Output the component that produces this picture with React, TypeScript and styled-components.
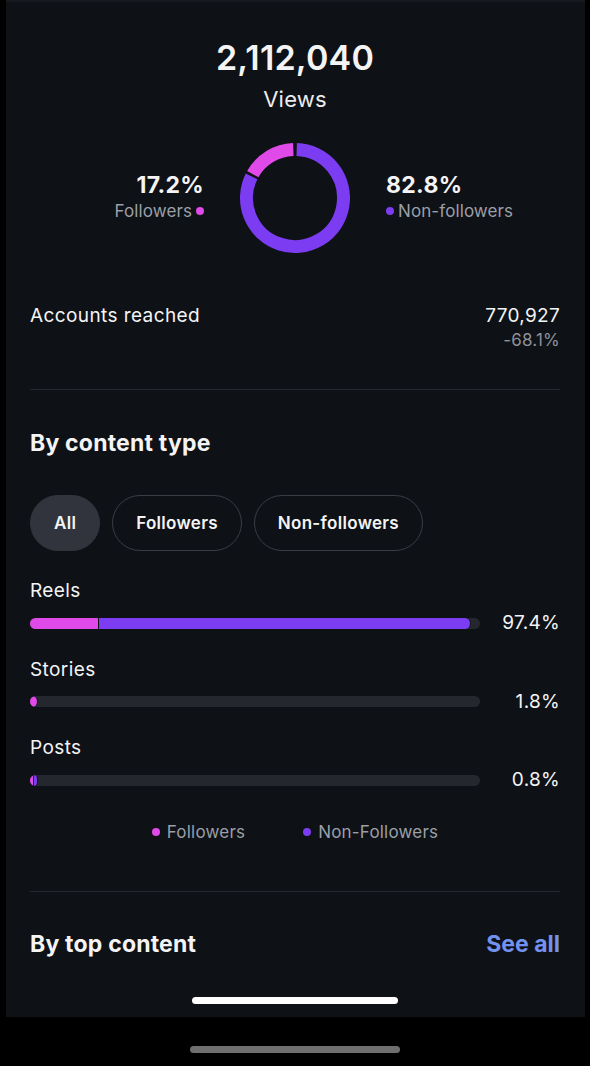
import styled, { createGlobalStyle } from "styled-components";

const PINK = "#e04ae8";
const PURPLE = "#7c3cf1";

type Segment = { color: string; width: number };

type ContentRow = {
  label: string;
  percent: string;
  segments: Segment[];
};

const rows: ContentRow[] = [
  {
    label: "Reels",
    percent: "97.4%",
    segments: [
      { color: PINK, width: 68 },
      { color: PURPLE, width: 371 },
    ],
  },
  {
    label: "Stories",
    percent: "1.8%",
    segments: [{ color: PINK, width: 7 }],
  },
  {
    label: "Posts",
    percent: "0.8%",
    segments: [
      { color: PINK, width: 3 },
      { color: PURPLE, width: 3 },
    ],
  },
];

const filters = ["All", "Followers", "Non-followers"];

const arcPath = (cx: number, cy: number, r: number, a0: number, a1: number) => {
  const pt = (a: number) => {
    const rad = (a * Math.PI) / 180;
    return [cx + r * Math.sin(rad), cy - r * Math.cos(rad)];
  };
  const [x0, y0] = pt(a0);
  const [x1, y1] = pt(a1);
  const large = a1 - a0 > 180 ? 1 : 0;
  return `M ${x0} ${y0} A ${r} ${r} 0 ${large} 1 ${x1} ${y1}`;
};

const Donut = () => (
  <svg width="110" height="110" viewBox="0 0 110 110">
    <path d={arcPath(55, 55, 48.5, 2, 296.5)} stroke={PURPLE} strokeWidth="13" fill="none" />
    <path d={arcPath(55, 55, 48.5, 299.5, 358)} stroke={PINK} strokeWidth="13" fill="none" />
  </svg>
);

export default function App() {
  return (
    <Screen>
      <GlobalStyle />
      <Panel>
        <Hero>
          <TotalViews>2,112,040</TotalViews>
          <ViewsLabel>Views</ViewsLabel>
        </Hero>

        <SplitRow>
          <SplitStat $align="right">
            <SplitValue>17.2%</SplitValue>
            <SplitLabel>
              Followers
              <Dot $color={PINK} />
            </SplitLabel>
          </SplitStat>
          <Donut />
          <SplitStat $align="left">
            <SplitValue>82.8%</SplitValue>
            <SplitLabel>
              <Dot $color={PURPLE} />
              Non-followers
            </SplitLabel>
          </SplitStat>
        </SplitRow>

        <StatRow>
          <StatName>Accounts reached</StatName>
          <StatNumbers>
            <StatValue>770,927</StatValue>
            <StatChange>-68.1%</StatChange>
          </StatNumbers>
        </StatRow>

        <Divider />

        <SectionTitle>By content type</SectionTitle>

        <PillRow>
          {filters.map((f, i) => (
            <Pill key={f} $active={i === 0}>
              {f}
            </Pill>
          ))}
        </PillRow>

        <BarList>
          {rows.map((row) => (
            <BarGroup key={row.label}>
              <BarLabel>{row.label}</BarLabel>
              <BarRow>
                <Track>
                  {row.segments.map((s, i) => (
                    <Fill key={i} $color={s.color} style={{ width: s.width }} />
                  ))}
                </Track>
                <BarPercent>{row.percent}</BarPercent>
              </BarRow>
            </BarGroup>
          ))}
        </BarList>

        <Legend>
          <LegendItem>
            <Dot $color={PINK} />
            Followers
          </LegendItem>
          <LegendItem>
            <Dot $color={PURPLE} />
            Non-Followers
          </LegendItem>
        </Legend>

        <Divider $top={48} />

        <SectionHeader>
          <SectionTitle $top={0}>By top content</SectionTitle>
          <SeeAll>See all</SeeAll>
        </SectionHeader>

        <HomeIndicator />
      </Panel>
      <SystemBar>
        <SystemIndicator />
      </SystemBar>
    </Screen>
  );
}

const GlobalStyle = createGlobalStyle`
  html, body {
    margin: 0;
    padding: 0;
    background: #000;
  }
  body {
    font-family: Inter, "Noto Sans", sans-serif;
    -webkit-font-smoothing: antialiased;
  }
`;

const Screen = styled.div`
  width: 590px;
  height: 1066px;
  display: flex;
  flex-direction: column;
  background: #000;
`;

const Panel = styled.div`
  box-sizing: border-box;
  width: 579px;
  height: 1017px;
  margin-left: 6px;
  padding: 36px 25px 0 24px;
  background: #0e1116;
  border-top: 2px solid #161920;
  display: flex;
  flex-direction: column;
  color: #f4f4f5;
`;

const Hero = styled.div`
  display: flex;
  flex-direction: column;
  align-items: center;
`;

const TotalViews = styled.div`
  font-size: 34px;
  line-height: 40px;
  font-weight: 600;
  letter-spacing: 0.2px;
`;

const ViewsLabel = styled.div`
  margin-top: 7px;
  font-size: 22px;
  line-height: 28px;
  color: #ececee;
  letter-spacing: 0.2px;
`;

const SplitRow = styled.div`
  margin-top: 30px;
  display: grid;
  grid-template-columns: 1fr auto 1fr;
  column-gap: 36px;
  align-items: center;
`;

const SplitStat = styled.div<{ $align: "left" | "right" }>`
  display: flex;
  flex-direction: column;
  align-items: ${(p) => (p.$align === "right" ? "flex-end" : "flex-start")};
  padding-bottom: 2px;
`;

const SplitValue = styled.div`
  font-size: 23px;
  line-height: 26px;
  font-weight: 700;
  letter-spacing: 0.3px;
`;

const SplitLabel = styled.div`
  margin-top: 2px;
  display: flex;
  align-items: center;
  gap: 4px;
  font-size: 17px;
  line-height: 22px;
  color: #9b9fa7;
  letter-spacing: 0.1px;
`;

const Dot = styled.span<{ $color: string }>`
  width: 8px;
  height: 8px;
  border-radius: 50%;
  background: ${(p) => p.$color};
  flex-shrink: 0;
`;

const StatRow = styled.div`
  margin-top: 51px;
  display: flex;
  justify-content: space-between;
  align-items: flex-start;
`;

const StatName = styled.div`
  font-size: 19px;
  line-height: 24px;
  letter-spacing: 0.4px;
`;

const StatNumbers = styled.div`
  display: flex;
  flex-direction: column;
  align-items: flex-end;
`;

const StatValue = styled.div`
  font-size: 19px;
  line-height: 24px;
  letter-spacing: 0.3px;
`;

const StatChange = styled.div`
  margin-top: 1px;
  font-size: 17px;
  line-height: 22px;
  color: #8e9299;
  letter-spacing: 0.2px;
`;

const Divider = styled.div<{ $top?: number }>`
  margin-top: ${(p) => p.$top ?? 38}px;
  height: 1px;
  background: #25282f;
`;

const SectionTitle = styled.div<{ $top?: number }>`
  margin-top: ${(p) => p.$top ?? 39}px;
  font-size: 23px;
  line-height: 28px;
  font-weight: 700;
  letter-spacing: 0.2px;
`;

const PillRow = styled.div`
  margin-top: 38px;
  display: flex;
  gap: 12px;
`;

const Pill = styled.div<{ $active?: boolean }>`
  box-sizing: border-box;
  height: 56px;
  padding: 0 23px;
  border-radius: 28px;
  display: flex;
  align-items: center;
  font-size: 17px;
  font-weight: 600;
  letter-spacing: 0.3px;
  background: ${(p) => (p.$active ? "#31343c" : "transparent")};
  border: 1px solid ${(p) => (p.$active ? "#31343c" : "#3a3d45")};
`;

const BarList = styled.div`
  margin-top: 28px;
  display: flex;
  flex-direction: column;
  gap: 22.5px;
`;

const BarGroup = styled.div`
  display: flex;
  flex-direction: column;
  gap: 8px;
`;

const BarLabel = styled.div`
  font-size: 19px;
  line-height: 24px;
  letter-spacing: 0.4px;
`;

const BarRow = styled.div`
  display: grid;
  grid-template-columns: 1fr 80px;
  align-items: center;
  height: 24px;
`;

const Track = styled.div`
  height: 11px;
  border-radius: 6px;
  background: #25272e;
  overflow: hidden;
  display: flex;
`;

const Fill = styled.div<{ $color: string }>`
  height: 100%;
  background: ${(p) => p.$color};
  border-right: 1px solid #0e1116;
  flex-shrink: 0;
  &:last-child {
    border-radius: 0 6px 6px 0;
  }
`;

const BarPercent = styled.div`
  text-align: right;
  font-size: 19px;
  line-height: 24px;
  letter-spacing: 0.3px;
`;

const Legend = styled.div`
  margin-top: 29px;
  display: flex;
  justify-content: center;
  gap: 58px;
`;

const LegendItem = styled.div`
  display: flex;
  align-items: center;
  gap: 7px;
  font-size: 17px;
  line-height: 22px;
  color: #9b9fa7;
  letter-spacing: 0.2px;
`;

const SectionHeader = styled.div`
  margin-top: 38px;
  display: flex;
  justify-content: space-between;
  align-items: center;
`;

const SeeAll = styled.div`
  font-size: 23px;
  line-height: 28px;
  font-weight: 700;
  color: #7391ee;
`;

const HomeIndicator = styled.div`
  align-self: center;
  margin-top: 39px;
  width: 206px;
  height: 7px;
  border-radius: 4px;
  background: #fff;
`;

const SystemBar = styled.div`
  flex: 1;
  display: flex;
  justify-content: center;
  padding-top: 29px;
`;

const SystemIndicator = styled.div`
  width: 210px;
  height: 7px;
  border-radius: 4px;
  background: #6f6f6f;
`;
